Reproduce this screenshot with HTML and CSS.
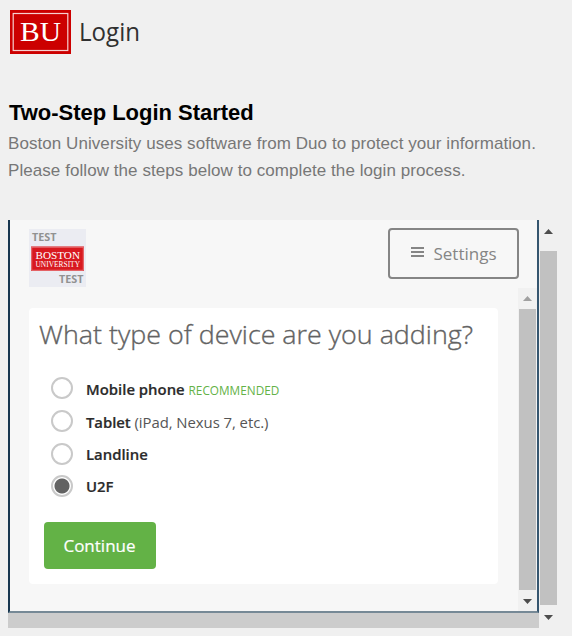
FILE: index.html
```html
<!DOCTYPE html>
<html lang="en">
<head>
<meta charset="utf-8">
<title>BU Login</title>
<link rel="stylesheet" href="styles.css">
</head>
<body>
<header class="brand">
  <svg class="brand-mark" width="61" height="44" viewBox="0 0 61 44">
    <rect width="61" height="44" fill="#c00"/>
    <rect x="3.2" y="3.5" width="54.6" height="37" fill="none" stroke="#f6d0d0" stroke-width="1.2"/>
    <text class="serif" x="10" y="31" font-size="27" textLength="41" lengthAdjust="spacingAndGlyphs">BU</text>
  </svg>
  <svg class="brand-name" width="64" height="44" viewBox="0 0 64 44"><text x="-1" y="31" textLength="61" lengthAdjust="spacingAndGlyphs">Login</text></svg>
</header>
<main>
  <h1>Two-Step Login Started</h1>
  <p class="intro">Boston University uses software from Duo to protect your information.<br>Please follow the steps below to complete the login process.</p>
  <div class="viewport">
    <section class="frame">
      <div class="toolbar">
        <svg class="seal" width="58" height="58" viewBox="0 0 58 58">
          <rect width="57" height="58" fill="#ebecf2"/>
          <text class="test" x="3" y="12" textLength="24.5" lengthAdjust="spacingAndGlyphs">TEST</text>
          <rect x="2" y="17.5" width="53" height="24.5" fill="#d8191f"/>
          <rect x="2.7" y="18.2" width="51.6" height="23.1" fill="none" stroke="#e87578" stroke-width="1"/>
          <text class="serif" x="6.5" y="29.5" font-size="10.5" textLength="44.5" lengthAdjust="spacingAndGlyphs">BOSTON</text>
          <text class="serif" x="6.5" y="38" font-size="7.2" textLength="44.5" lengthAdjust="spacingAndGlyphs">UNIVERSITY</text>
          <text class="test" x="30" y="54" textLength="24.5" lengthAdjust="spacingAndGlyphs">TEST</text>
        </svg>
        <button class="settings">
          <svg width="13" height="12" viewBox="0 0 13 12"><path d="M0 1h13M0 5h13M0 9h13" stroke="#858585" stroke-width="2"/></svg>
          <span>Settings</span>
        </button>
      </div>
      <div class="content">
        <form class="card">
          <h2><svg width="440" height="44" viewBox="0 0 440 44"><text x="0" y="32" textLength="434" lengthAdjust="spacingAndGlyphs">What type of device are you adding?</text></svg></h2>
          <label class="option"><i class="radio"></i><span><b>Mobile phone</b> <em>RECOMMENDED</em></span></label>
          <label class="option tablet"><i class="radio"></i><span><b>Tablet</b> (iPad, Nexus 7, etc.)</span></label>
          <label class="option low"><i class="radio"></i><span><b>Landline</b></span></label>
          <label class="option low"><i class="radio checked"></i><span><b>U2F</b></span></label>
          <button class="continue">Continue</button>
        </form>
        <div class="scroll inner">
          <svg width="9" height="5" viewBox="0 0 9 5"><path d="M0 5L4.5 0L9 5z" fill="#a0a0a0"/></svg>
          <div class="thumb"></div>
          <svg width="9" height="5" viewBox="0 0 9 5"><path d="M0 0L4.5 5L9 0z" fill="#4d4d4d"/></svg>
        </div>
      </div>
    </section>
    <div class="scroll outer">
      <svg width="9" height="5" viewBox="0 0 9 5"><path d="M0 5L4.5 0L9 5z" fill="#4d4d4d"/></svg>
      <div class="thumb"></div>
      <svg width="9" height="5" viewBox="0 0 9 5"><path d="M0 0L4.5 5L9 0z" fill="#4d4d4d"/></svg>
    </div>
    <div class="bottom-bar"></div>
  </div>
</main>
</body>
</html>
```
FILE: styles.css
```css
* { box-sizing: border-box; }
body { margin: 0; padding: 10px 8px 0; height: 636px; overflow: hidden; background: #f0f0f0; font-family: "Liberation Sans", Arial, sans-serif; }
svg { display: block; flex: none; }
.brand { display: flex; gap: 9px; height: 44px; padding-left: 2px; }
.brand-name { overflow: visible; }
.brand-name text { font: 25.5px "Open Sans", sans-serif; fill: #303030; }
.serif { font-family: "Liberation Serif", serif; fill: #fff; }
h1 { margin: 45px 0 0; padding-left: 1px; font-size: 22px; line-height: 27px; color: #000; white-space: nowrap; letter-spacing: -.03px; }
.intro { margin: 4px 0 0; height: 90px; font-size: 17px; line-height: 27px; letter-spacing: .065px; color: #777; white-space: nowrap; }
.viewport { display: grid; grid-template-columns: 531px 20px; grid-template-rows: 393px 15px; }
.frame { display: flex; flex-direction: column; background: #f7f7f7; border-left: 2px solid #17364f; border-right: 2px solid #36566f; border-bottom: 2px solid #768996; overflow: hidden; }
.toolbar { display: flex; justify-content: space-between; align-items: flex-start; height: 68px; padding: 9px 18px 0 19px; }
.settings { display: flex; align-items: center; justify-content: center; gap: 9px; width: 131px; height: 51px; margin-top: -1px; padding: 0 0 1px 1px; border: 2px solid #858585; border-radius: 4px; background: #f7f7f7; color: #858585; font: 17px "Open Sans", sans-serif; }
.test { font: bold 10.5px "Open Sans", sans-serif; fill: #919191; }
.content { display: flex; justify-content: space-between; height: 323px; padding-left: 19px; }
.card { width: 469px; height: 276px; margin-top: 20px; background: #fff; border-radius: 4px; }
h2 { height: 64px; margin: 0; padding: 4px 0 0 10px; }
h2 text { font: 300 26px "Open Sans", sans-serif; fill: #626262; stroke: #626262; stroke-width: .35px; }
.option { display: flex; align-items: center; gap: 13px; height: 32px; padding-left: 22px; font: 14.9px "Open Sans", sans-serif; color: #555; }
.option.tablet { height: 34px; }
.option b { font-weight: 600; color: #2b2b2b; -webkit-text-stroke: .2px #2b2b2b; }
.option em { font-size: 11.8px; font-style: normal; color: #63b246; }
.option span { padding-top: 1px; white-space: nowrap; }
.option.low span { padding: 0 0 1px; }
.tablet span { letter-spacing: -.05px; }
.radio { width: 22px; height: 22px; border: 2px solid #c9c9c9; border-radius: 50%; }
.radio.checked { background: radial-gradient(circle, #626262 0 7px, #fff 8px); }
.continue { display: block; width: 112px; height: 47px; margin: 20px 0 0 15px; padding: 0 1px 0 0; border: 0; border-radius: 4px; background: #63b246; color: #fff; font: 17px "Open Sans", sans-serif; -webkit-text-stroke: .2px #fff; }
.scroll { display: flex; flex-direction: column; align-items: center; }
.thumb { width: 17px; background: #c1c1c1; }
.inner { width: 19px; padding-top: 8px; background: #f1f1f1; }
.inner .thumb { height: 281px; margin: 8px 0 9px; }
.outer { width: 19px; padding-top: 9px; }
.outer .thumb { height: 354px; margin: 17px 0 10px; flex: none; }
.bottom-bar { background: #ccc; }
```
